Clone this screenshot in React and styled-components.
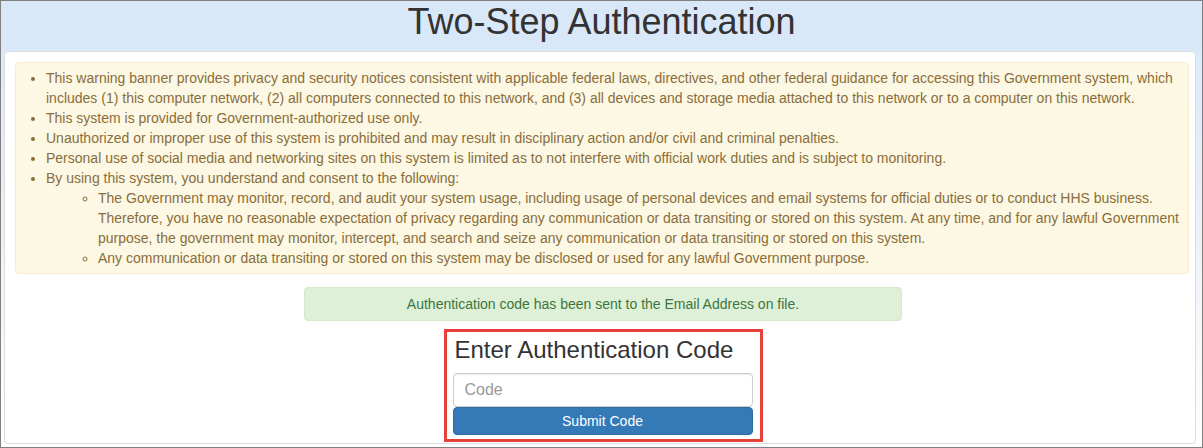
import styled, { createGlobalStyle } from "styled-components";

const GlobalStyle = createGlobalStyle`
  body {
    margin: 0;
    font-family: "Liberation Sans", Arial, sans-serif;
    background: #fff;
  }
  * { box-sizing: border-box; }
`;

const Frame = styled.div`
  width: 1203px;
  height: 448px;
  border: 1px solid #808080;
  background: linear-gradient(#d9e8f9 0%, #e6eff9 40%, #ffffff 100%);
  display: flex;
  flex-direction: column;
`;

const Header = styled.div`
  height: 50px;
  padding-top: 3px;
  background: #d9e8f9;
  text-align: center;
`;

const Title = styled.h1`
  margin: 0;
  font-size: 36px;
  line-height: 36px;
  font-weight: 500;
  color: #333;
`;

const Panel = styled.div`
  flex: 1;
  margin: 0 6px 3px 3px;
  background: #fff;
  border: 1px solid #dcdcdc;
  border-radius: 4px;
  padding: 10px 6px 0 10px;
`;

const Warning = styled.div`
  background: #fcf8e3;
  border: 1px solid #faebcc;
  border-radius: 4px;
  color: #8a6d3b;
  font-size: 14px;
  line-height: 20px;
  padding: 5px 4px 5px 15px;
`;

const List = styled.ul`
  margin: 0;
  padding-left: ${(p) => (p.$nested ? "52px" : "15px")};
  list-style-type: ${(p) => (p.$nested ? "circle" : "disc")};
`;

const Center = styled.div`
  display: flex;
  flex-direction: column;
  align-items: center;
  padding-left: 2px;
`;

const Success = styled.div`
  width: 598px;
  margin-top: 13px;
  background: #dff0d8;
  border: 1px solid #d6e9c6;
  border-radius: 4px;
  color: #3c763d;
  font-size: 14px;
  line-height: 20px;
  padding: 6px 15px;
  text-align: center;
`;

const CodeBox = styled.div`
  width: 319px;
  margin-top: 8px;
  border: 3px solid #e8413c;
  padding: 4px 7px 4px 6px;
  background: #fff;
`;

const Heading = styled.h3`
  margin: 0 0 10px 2px;
  font-size: 24px;
  line-height: 27px;
  font-weight: 500;
  color: #333;
`;

const Input = styled.input`
  display: block;
  width: 300px;
  height: 34px;
  border: 1px solid #ccc;
  border-radius: 4px;
  padding: 0 11px;
  font-family: "Liberation Sans", Arial, sans-serif;
  font-size: 16px;
  color: #555;
  box-shadow: inset 0 1px 1px rgba(0, 0, 0, 0.075);
  &::placeholder { color: #999; }
`;

const Button = styled.button`
  display: block;
  width: 300px;
  height: 28px;
  background: #337ab7;
  border: 1px solid #2e6da4;
  border-radius: 4px;
  color: #fff;
  font-family: "Liberation Sans", Arial, sans-serif;
  font-size: 14px;
  cursor: pointer;
`;

const App = () => {
  return (
    <>
      <GlobalStyle />
      <Frame>
        <Header>
          <Title>Two-Step Authentication</Title>
        </Header>
        <Panel>
          <Warning>
            <List>
              <li>
                This warning banner provides privacy and security notices consistent with applicable federal laws, directives, and other federal guidance for accessing this Government system, which includes (1) this computer network, (2) all computers connected to this network, and (3) all devices and storage media attached to this network or to a computer on this network.
              </li>
              <li>This system is provided for Government-authorized use only.</li>
              <li>Unauthorized or improper use of this system is prohibited and may result in disciplinary action and/or civil and criminal penalties.</li>
              <li>Personal use of social media and networking sites on this system is limited as to not interfere with official work duties and is subject to monitoring.</li>
              <li>
                By using this system, you understand and consent to the following:
                <List $nested>
                  <li>
                    The Government may monitor, record, and audit your system usage, including usage of personal devices and email systems for official duties or to conduct HHS business. Therefore, you have no reasonable expectation of privacy regarding any communication or data transiting or stored on this system. At any time, and for any lawful Government purpose, the government may monitor, intercept, and search and seize any communication or data transiting or stored on this system.
                  </li>
                  <li>Any communication or data transiting or stored on this system may be disclosed or used for any lawful Government purpose.</li>
                </List>
              </li>
            </List>
          </Warning>
          <Center>
            <Success>Authentication code has been sent to the Email Address on file.</Success>
            <CodeBox>
              <Heading>Enter Authentication Code</Heading>
              <Input placeholder="Code" />
              <Button>Submit Code</Button>
            </CodeBox>
          </Center>
        </Panel>
      </Frame>
    </>
  );
};

export default App;
